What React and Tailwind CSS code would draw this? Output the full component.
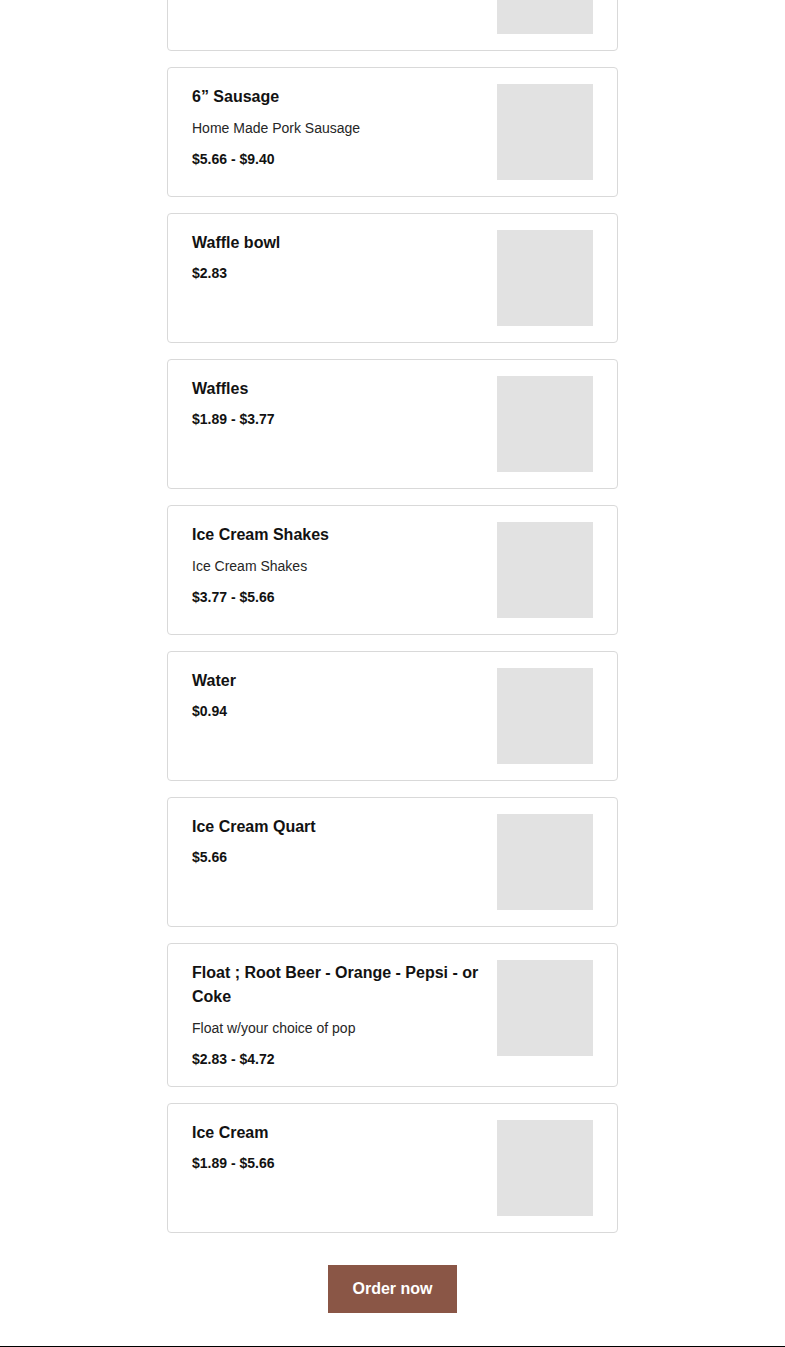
import React from "react";

const items = [
  { title: "Hidden", price: "", hidden: true },
  { title: "6\u201D Sausage", desc: "Home Made Pork Sausage", price: "$5.66 - $9.40" },
  { title: "Waffle bowl", price: "$2.83" },
  { title: "Waffles", price: "$1.89 - $3.77" },
  { title: "Ice Cream Shakes", desc: "Ice Cream Shakes", price: "$3.77 - $5.66" },
  { title: "Water", price: "$0.94" },
  { title: "Ice Cream Quart", price: "$5.66" },
  { title: "Float ; Root Beer - Orange - Pepsi - or Coke", desc: "Float w/your choice of pop", price: "$2.83 - $4.72" },
  { title: "Ice Cream", price: "$1.89 - $5.66" },
];

function Card({ item }) {
  return (
    <div className="flex gap-4 rounded border border-[#d9d9d9] bg-white px-6 py-4">
      <div className="flex min-w-0 flex-1 flex-col">
        {!item.hidden && (
          <>
            <div className="mt-px text-base font-bold leading-6 text-[#121212]">{item.title}</div>
            {item.desc && <div className="mt-[7px] text-sm leading-6 text-[#262626]">{item.desc}</div>}
            <div
              className={
                item.desc
                  ? "mt-2 text-sm font-bold leading-[22px] text-[#121212]"
                  : "mt-[7px] text-sm font-bold leading-[22px] text-[#121212]"
              }
            >
              {item.price}
            </div>
          </>
        )}
      </div>
      <div className="h-24 w-24 shrink-0 bg-[#e2e2e2]" />
    </div>
  );
}

export default function App() {
  return (
    <div className="min-h-[1347px] bg-white font-['Liberation_Sans',Arial,sans-serif]">
      <div className="mx-auto -mt-[79px] flex w-[451px] flex-col gap-4">
        {items.map((it, i) => (
          <Card key={i} item={it} />
        ))}
      </div>
      <div className="mt-8 flex justify-center">
        <button className="h-12 w-[129px] bg-[#8a5646] text-base font-bold text-white">
          Order now
        </button>
      </div>
      <div className="mt-[33px] border-t border-black" />
    </div>
  );
}
